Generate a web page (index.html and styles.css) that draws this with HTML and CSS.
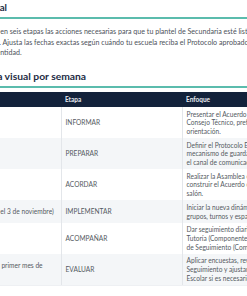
FILE: index.html
```html
<!DOCTYPE html>
<html lang="es">
<head>
<meta charset="utf-8">
<title>Cronograma visual por semana</title>
<link rel="stylesheet" href="styles.css">
</head>
<body>
<main class="page">
  <h2 class="title">Visión general</h2>
  <p class="intro">Esta guía ordena en seis etapas las acciones necesarias para que tu plantel de Secundaria esté listo para el arranque del año. Ajusta las fechas exactas según cuándo tu escuela reciba el Protocolo aprobado por la autoridad de tu entidad.</p>
  <h2 class="title section">Cronograma visual por semana</h2>
  <table class="plan">
    <colgroup>
      <col class="c-week">
      <col class="c-stage">
      <col class="c-focus">
    </colgroup>
    <thead>
      <tr><th>Semana</th><th>Etapa</th><th>Enfoque</th></tr>
    </thead>
    <tbody>
      <tr><td>Semana 1</td><td>INFORMAR</td><td>Presentar el Acuerdo Escolar de Convivencia al Consejo Técnico, preferentemente durante la orientación.</td></tr>
      <tr><td>Semana 2</td><td>PREPARAR</td><td>Definir el Protocolo Escolar, los horarios, el mecanismo de guardado de los dispositivos, y el&nbsp;canal de comunicación con las familias.</td></tr>
      <tr><td>Semana 3</td><td>ACORDAR</td><td>Realizar la Asamblea con los estudiantes para construir el Acuerdo de Convivencia Digital del salón.</td></tr>
      <tr><td>Semana 4 (desde el 3 de noviembre)</td><td>IMPLEMENTAR</td><td>Iniciar la nueva dinámica de uso en todos los grupos, turnos y espacios del plantel.</td></tr>
      <tr><td>Semanas 5 y 6</td><td>ACOMPAÑAR</td><td>Dar seguimiento diario al uso, a través de la Tutoría (Componente Formativo) y del Comité de&nbsp;Seguimiento (Componente de Gestión).</td></tr>
      <tr><td>Al completarse el primer mes de aplicación</td><td>EVALUAR</td><td>Aplicar encuestas, revisar datos del Comité de Seguimiento y ajustar el Acuerdo y el Protocolo Escolar si es necesario.</td></tr>
    </tbody>
  </table>
</main>
</body>
</html>
```

FILE: styles.css
```css
html, body {
  margin: 0;
  background: #ffffff;
}
body {
  overflow: hidden;
  font-family: Lato, "Open Sans", sans-serif;
}
.page {
  width: 386px;
  margin-left: -54px;
  padding-top: 1px;
}
.title {
  margin: 0;
  font-size: 9.7px;
  line-height: 12px;
  font-weight: 700;
  color: #1d2b44;
  padding-bottom: 4px;
  border-bottom: 2px solid #5bbcad;
}
.section {
  margin-top: 11.5px;
  font-size: 10.3px;
}
.intro {
  max-width: 339px;
  margin: 8px 0 0 1px;
  font-size: 7.1px;
  line-height: 10.5px;
  color: #4d525a;
}
.plan {
  margin-top: 4px;
  width: 100%;
  border-collapse: collapse;
  table-layout: fixed;
  font-size: 6.6px;
  line-height: 8.7px;
  color: #555a62;
}
.c-week { width: 115px; }
.c-stage { width: 121px; }
.c-focus { width: 150px; }
.plan th {
  background: #13223b;
  color: #e6eaf0;
  font-weight: 700;
  font-size: 6.5px;
  line-height: 8px;
  text-align: left;
  padding: 3.5px 4px;
}
.plan td {
  padding: 2.5px 4px;
  vertical-align: middle;
}
.plan td + td {
  border-left: 1px solid #e3e6ea;
}
.plan tbody tr:nth-child(even) td {
  background: #f4f6f8;
}
.plan tbody tr:last-child td {
  border-bottom: 1px solid #eef0f3;
}
```
